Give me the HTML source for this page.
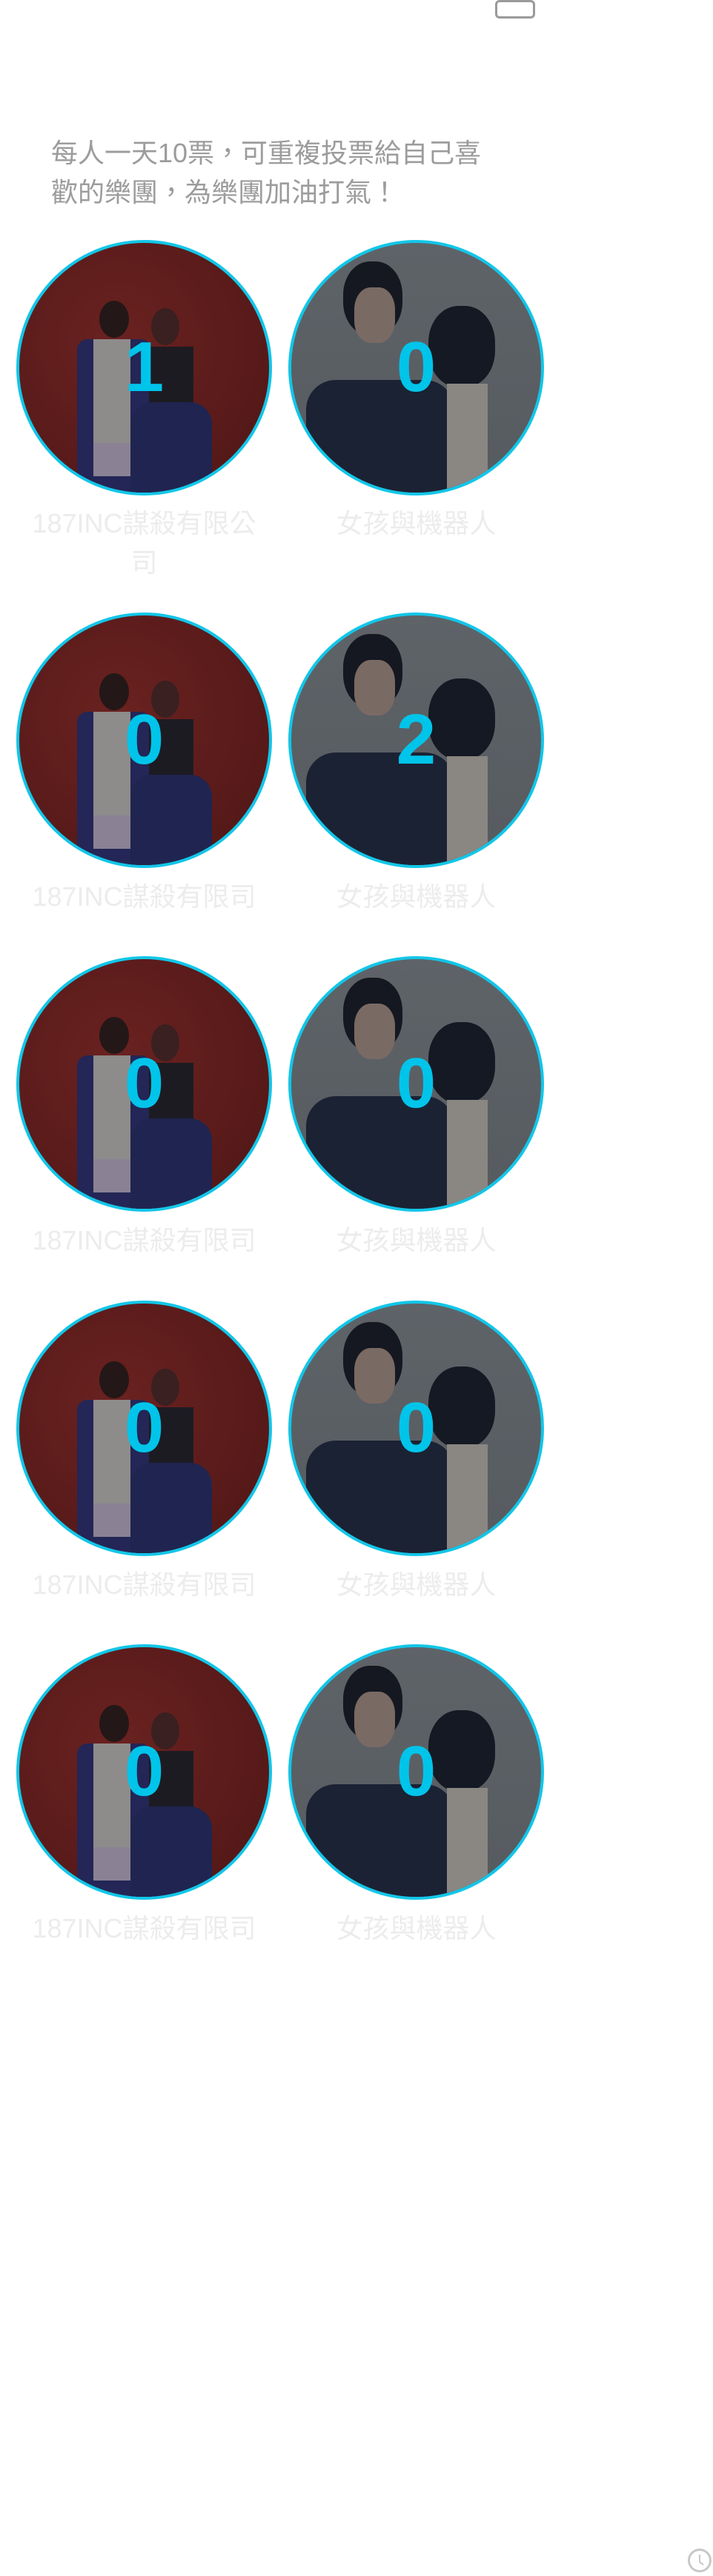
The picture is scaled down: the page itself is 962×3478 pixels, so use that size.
<!DOCTYPE html>
<html><head><meta charset="utf-8"><style>
html,body{margin:0;padding:0;background:#fff;width:962px;height:3478px;overflow:hidden;position:relative;font-family:"Liberation Sans","Noto Sans CJK TC",sans-serif}
.btn{position:absolute;left:668px;top:0px;width:54px;height:25px;border:3px solid #9a9a9a;border-radius:6px;box-sizing:border-box}
.intro{position:absolute;left:69px;top:180px;width:600px;font-size:36px;line-height:53px;color:#9c9c9c}
.c{position:absolute;width:345px;height:345px;border-radius:50%;border:4px solid #12c6e8;box-sizing:border-box;overflow:hidden}
.red{background:radial-gradient(circle at 40% 40%,#6a2220,#4e1616)}
.grey{background:linear-gradient(#5e6368,#565b60)}
.c div{position:absolute}
.num{position:absolute;width:345px;text-align:center;font-weight:bold;font-size:96px;color:#00c4ea;line-height:100px}
.name{position:absolute;width:345px;text-align:center;font-size:36px;line-height:53px;color:#ececec}
.clock{position:absolute;left:928px;top:3441px;width:32px;height:32px;border:3px solid #c8c8c8;border-radius:50%;box-sizing:border-box}
.clock:before{content:"";position:absolute;left:12px;top:5px;width:2px;height:10px;background:#c8c8c8}
.clock:after{content:"";position:absolute;left:13px;top:14px;width:7px;height:2px;background:#c8c8c8;transform:rotate(35deg);transform-origin:0 0}
</style></head><body>
<div class="btn"></div>
<div class="intro">每人一天10票，可重複投票給自己喜歡的樂團，為樂團加油打氣！</div>

<div class="c red" style="left:22px;top:324px"><div style="left:78px;top:130px;width:100px;height:220px;background:#232656;border-radius:14px 14px 0 0"></div><div style="left:100px;top:130px;width:50px;height:140px;background:#8e8b8b"></div><div style="left:100px;top:270px;width:50px;height:45px;background:#8a8294"></div><div style="left:108px;top:78px;width:40px;height:50px;border-radius:50%;background:#241717"></div><div style="left:178px;top:88px;width:38px;height:50px;border-radius:50%;background:#3a2020"></div><div style="left:175px;top:140px;width:60px;height:80px;background:#1d1b22"></div><div style="left:150px;top:215px;width:110px;height:140px;background:#1f2550;border-radius:30px 30px 0 0"></div></div>
<div class="c grey" style="left:389px;top:324px"><div style="left:70px;top:25px;width:80px;height:100px;border-radius:45%;background:#151820"></div><div style="left:85px;top:60px;width:55px;height:75px;border-radius:40%;background:#7a6a64"></div><div style="left:20px;top:185px;width:200px;height:200px;background:#1b2233;border-radius:40px 40px 0 0"></div><div style="left:185px;top:85px;width:90px;height:110px;border-radius:45%;background:#141923"></div><div style="left:210px;top:190px;width:55px;height:160px;background:#8a8682"></div></div>
<div class="num" style="left:22px;top:446px">1</div><div class="num" style="left:389px;top:446px">0</div>
<div class="name" style="left:22px;top:680px">187INC謀殺有限公<br>司</div><div class="name" style="left:389px;top:680px">女孩與機器人</div>

<div class="c red" style="left:22px;top:827px"><div style="left:78px;top:130px;width:100px;height:220px;background:#232656;border-radius:14px 14px 0 0"></div><div style="left:100px;top:130px;width:50px;height:140px;background:#8e8b8b"></div><div style="left:100px;top:270px;width:50px;height:45px;background:#8a8294"></div><div style="left:108px;top:78px;width:40px;height:50px;border-radius:50%;background:#241717"></div><div style="left:178px;top:88px;width:38px;height:50px;border-radius:50%;background:#3a2020"></div><div style="left:175px;top:140px;width:60px;height:80px;background:#1d1b22"></div><div style="left:150px;top:215px;width:110px;height:140px;background:#1f2550;border-radius:30px 30px 0 0"></div></div>
<div class="c grey" style="left:389px;top:827px"><div style="left:70px;top:25px;width:80px;height:100px;border-radius:45%;background:#151820"></div><div style="left:85px;top:60px;width:55px;height:75px;border-radius:40%;background:#7a6a64"></div><div style="left:20px;top:185px;width:200px;height:200px;background:#1b2233;border-radius:40px 40px 0 0"></div><div style="left:185px;top:85px;width:90px;height:110px;border-radius:45%;background:#141923"></div><div style="left:210px;top:190px;width:55px;height:160px;background:#8a8682"></div></div>
<div class="num" style="left:22px;top:949px">0</div><div class="num" style="left:389px;top:949px">2</div>
<div class="name" style="left:22px;top:1184px">187INC謀殺有限司</div><div class="name" style="left:389px;top:1184px">女孩與機器人</div>

<div class="c red" style="left:22px;top:1291px"><div style="left:78px;top:130px;width:100px;height:220px;background:#232656;border-radius:14px 14px 0 0"></div><div style="left:100px;top:130px;width:50px;height:140px;background:#8e8b8b"></div><div style="left:100px;top:270px;width:50px;height:45px;background:#8a8294"></div><div style="left:108px;top:78px;width:40px;height:50px;border-radius:50%;background:#241717"></div><div style="left:178px;top:88px;width:38px;height:50px;border-radius:50%;background:#3a2020"></div><div style="left:175px;top:140px;width:60px;height:80px;background:#1d1b22"></div><div style="left:150px;top:215px;width:110px;height:140px;background:#1f2550;border-radius:30px 30px 0 0"></div></div>
<div class="c grey" style="left:389px;top:1291px"><div style="left:70px;top:25px;width:80px;height:100px;border-radius:45%;background:#151820"></div><div style="left:85px;top:60px;width:55px;height:75px;border-radius:40%;background:#7a6a64"></div><div style="left:20px;top:185px;width:200px;height:200px;background:#1b2233;border-radius:40px 40px 0 0"></div><div style="left:185px;top:85px;width:90px;height:110px;border-radius:45%;background:#141923"></div><div style="left:210px;top:190px;width:55px;height:160px;background:#8a8682"></div></div>
<div class="num" style="left:22px;top:1413px">0</div><div class="num" style="left:389px;top:1413px">0</div>
<div class="name" style="left:22px;top:1648px">187INC謀殺有限司</div><div class="name" style="left:389px;top:1648px">女孩與機器人</div>

<div class="c red" style="left:22px;top:1756px"><div style="left:78px;top:130px;width:100px;height:220px;background:#232656;border-radius:14px 14px 0 0"></div><div style="left:100px;top:130px;width:50px;height:140px;background:#8e8b8b"></div><div style="left:100px;top:270px;width:50px;height:45px;background:#8a8294"></div><div style="left:108px;top:78px;width:40px;height:50px;border-radius:50%;background:#241717"></div><div style="left:178px;top:88px;width:38px;height:50px;border-radius:50%;background:#3a2020"></div><div style="left:175px;top:140px;width:60px;height:80px;background:#1d1b22"></div><div style="left:150px;top:215px;width:110px;height:140px;background:#1f2550;border-radius:30px 30px 0 0"></div></div>
<div class="c grey" style="left:389px;top:1756px"><div style="left:70px;top:25px;width:80px;height:100px;border-radius:45%;background:#151820"></div><div style="left:85px;top:60px;width:55px;height:75px;border-radius:40%;background:#7a6a64"></div><div style="left:20px;top:185px;width:200px;height:200px;background:#1b2233;border-radius:40px 40px 0 0"></div><div style="left:185px;top:85px;width:90px;height:110px;border-radius:45%;background:#141923"></div><div style="left:210px;top:190px;width:55px;height:160px;background:#8a8682"></div></div>
<div class="num" style="left:22px;top:1878px">0</div><div class="num" style="left:389px;top:1878px">0</div>
<div class="name" style="left:22px;top:2113px">187INC謀殺有限司</div><div class="name" style="left:389px;top:2113px">女孩與機器人</div>

<div class="c red" style="left:22px;top:2220px"><div style="left:78px;top:130px;width:100px;height:220px;background:#232656;border-radius:14px 14px 0 0"></div><div style="left:100px;top:130px;width:50px;height:140px;background:#8e8b8b"></div><div style="left:100px;top:270px;width:50px;height:45px;background:#8a8294"></div><div style="left:108px;top:78px;width:40px;height:50px;border-radius:50%;background:#241717"></div><div style="left:178px;top:88px;width:38px;height:50px;border-radius:50%;background:#3a2020"></div><div style="left:175px;top:140px;width:60px;height:80px;background:#1d1b22"></div><div style="left:150px;top:215px;width:110px;height:140px;background:#1f2550;border-radius:30px 30px 0 0"></div></div>
<div class="c grey" style="left:389px;top:2220px"><div style="left:70px;top:25px;width:80px;height:100px;border-radius:45%;background:#151820"></div><div style="left:85px;top:60px;width:55px;height:75px;border-radius:40%;background:#7a6a64"></div><div style="left:20px;top:185px;width:200px;height:200px;background:#1b2233;border-radius:40px 40px 0 0"></div><div style="left:185px;top:85px;width:90px;height:110px;border-radius:45%;background:#141923"></div><div style="left:210px;top:190px;width:55px;height:160px;background:#8a8682"></div></div>
<div class="num" style="left:22px;top:2342px">0</div><div class="num" style="left:389px;top:2342px">0</div>
<div class="name" style="left:22px;top:2577px">187INC謀殺有限司</div><div class="name" style="left:389px;top:2577px">女孩與機器人</div>

<div class="clock"></div>
</body></html>
